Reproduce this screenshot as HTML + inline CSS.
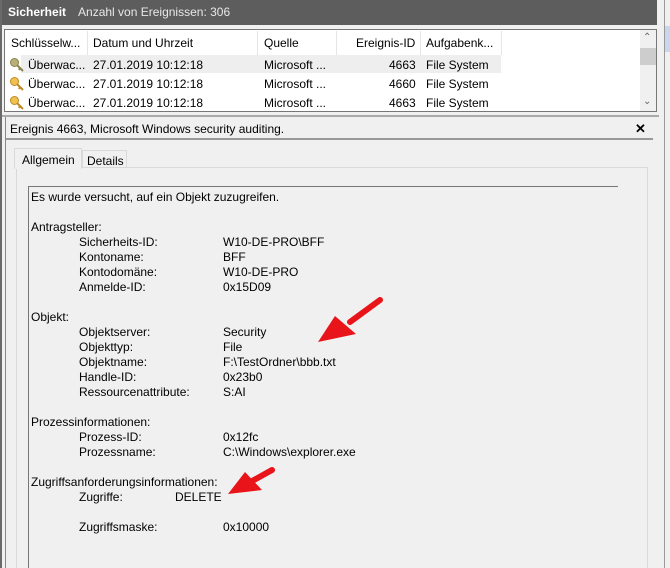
<!DOCTYPE html><html><head><style>
*{margin:0;padding:0;box-sizing:border-box}
html{overflow:hidden}
body{width:670px;height:568px;background:#f0f0f0;font-family:"Liberation Sans",sans-serif;font-size:12px;color:#000;position:relative;overflow:hidden}
.a{position:absolute;white-space:nowrap}
</style></head><body>
<div class="a" style="left:0;top:0;width:657px;height:25px;background:#5d5d5d;color:#fff;font-size:12px;line-height:24px;padding-left:8px"><b>Sicherheit</b><span style="margin-left:12px;color:#e8e8e8">Anzahl von Ereignissen: 306</span></div>
<div class="a" style="left:0;top:0;width:2px;height:568px;background:#6a6a6a"></div>
<div class="a" style="left:664px;top:0;width:1px;height:568px;background:#999"></div>
<div class="a" style="left:665px;top:26px;width:5px;height:26px;background:#c8d8ec"></div>
<div class="a" style="left:4px;top:29px;width:653px;height:83px;background:#fff;border:1px solid #777"></div>
<div class="a" style="left:640px;top:30px;width:16px;height:81px;background:#f0f0f0"></div>
<div class="a" style="left:640px;top:48px;width:16px;height:17px;background:#cdcdcd"></div>
<div class="a" style="left:643px;top:32px;font-size:10px;color:#666">&#8963;</div>
<div class="a" style="left:643px;top:96px;font-size:10px;color:#666">&#8964;</div>
<div class="a" style="left:21px;top:55px;width:480px;height:18px;background:#eeeeee"></div>
<div class="a" style="left:87px;top:31px;width:1px;height:24px;background:#e5e5e5"></div>
<div class="a" style="left:257px;top:31px;width:1px;height:24px;background:#e5e5e5"></div>
<div class="a" style="left:336px;top:31px;width:1px;height:24px;background:#e5e5e5"></div>
<div class="a" style="left:420px;top:31px;width:1px;height:24px;background:#e5e5e5"></div>
<div class="a" style="left:501px;top:31px;width:1px;height:24px;background:#e5e5e5"></div>
<div class="a" style="left:11px;top:36px">Schlüsselw...</div>
<div class="a" style="left:93px;top:36px">Datum und Uhrzeit</div>
<div class="a" style="left:264px;top:36px">Quelle</div>
<div class="a" style="left:356px;top:36px">Ereignis-ID</div>
<div class="a" style="left:426px;top:36px">Aufgabenk...</div>
<div class="a" style="top:57px;left:0;width:500px">
<svg class="a" style="left:9px;top:0" width="16" height="16"><circle cx="5.5" cy="5.5" r="4" fill="#b8b078" stroke="#8a8450"/><path d="M8 8 L14 14 M11 11 L10 13" stroke="#8a8450" stroke-width="2"/></svg>
<div class="a" style="left:28px;top:1px">Überwac...</div><div class="a" style="left:93px;top:1px">27.01.2019 10:12:18</div><div class="a" style="left:264px;top:1px">Microsoft ...</div><div class="a" style="left:389px;top:1px">4663</div><div class="a" style="left:426px;top:1px">File System</div></div>
<div class="a" style="top:76px;left:0;width:500px">
<svg class="a" style="left:9px;top:0" width="16" height="16"><circle cx="5.5" cy="5.5" r="4" fill="#f0c050" stroke="#c08a20"/><path d="M8 8 L14 14 M11 11 L10 13" stroke="#c08a20" stroke-width="2"/></svg>
<div class="a" style="left:28px;top:1px">Überwac...</div><div class="a" style="left:93px;top:1px">27.01.2019 10:12:18</div><div class="a" style="left:264px;top:1px">Microsoft ...</div><div class="a" style="left:389px;top:1px">4660</div><div class="a" style="left:426px;top:1px">File System</div></div>
<div class="a" style="top:95px;left:0;width:500px">
<svg class="a" style="left:9px;top:0" width="16" height="16"><circle cx="5.5" cy="5.5" r="4" fill="#f0c050" stroke="#c08a20"/><path d="M8 8 L14 14 M11 11 L10 13" stroke="#c08a20" stroke-width="2"/></svg>
<div class="a" style="left:28px;top:1px">Überwac...</div><div class="a" style="left:93px;top:1px">27.01.2019 10:12:18</div><div class="a" style="left:264px;top:1px">Microsoft ...</div><div class="a" style="left:389px;top:1px">4663</div><div class="a" style="left:426px;top:1px">File System</div></div>
<div class="a" style="left:2px;top:115px;width:657px;height:2px;background:#aaa"></div>
<div class="a" style="left:5px;top:117px;width:1px;height:451px;background:#888"></div>
<div class="a" style="left:10px;top:122px">Ereignis 4663, Microsoft Windows security auditing.</div>
<div class="a" style="left:635px;top:121px;font-weight:bold;font-size:13px">✕</div>
<div class="a" style="left:6px;top:138px;width:647px;height:2px;background:#999"></div>
<div class="a" style="left:16px;top:167px;width:632px;height:401px;background:#f0f0f0;border:1px solid #d9d9d9;border-bottom:none"></div>
<div class="a" style="left:14px;top:148px;width:68px;height:21px;background:#f0f0f0;border:1px solid #d9d9d9;border-bottom:none;padding:4px 0 0 7px">Allgemein</div>
<div class="a" style="left:82px;top:150px;width:45px;height:17px;border:1px solid #d9d9d9;border-bottom:none;padding:3px 0 0 4px">Details</div>
<div class="a" style="left:28px;top:186px;width:590px;height:382px;border-top:1px solid #777;border-left:1px solid #777"></div>
<div class="a" style="left:31px;top:190px;line-height:15px">Es wurde versucht, auf ein Objekt zuzugreifen.<br><br>Antragsteller:<br><br><br><br><br><br>Objekt:<br><br><br><br><br><br><br>Prozessinformationen:<br><br><br><br>Zugriffsanforderungsinformationen:</div>
<div class="a" style="left:79px;top:235px;line-height:15px">Sicherheits-ID:<br>Kontoname:<br>Kontodomäne:<br>Anmelde-ID:<br><br><br>Objektserver:<br>Objekttyp:<br>Objektname:<br>Handle-ID:<br>Ressourcenattribute:<br><br><br>Prozess-ID:<br>Prozessname:<br><br><br>Zugriffe:<br><br>Zugriffsmaske:</div>
<div class="a" style="left:223px;top:235px;line-height:15px">W10-DE-PRO\BFF<br>BFF<br>W10-DE-PRO<br>0x15D09<br><br><br>Security<br>File<br>F:\TestOrdner\bbb.txt<br>0x23b0<br>S:AI<br><br><br>0x12fc<br>C:\Windows\explorer.exe<br><br><br><br><br>0x10000</div>
<div class="a" style="left:175px;top:490px">DELETE</div>
<svg class="a" style="left:0;top:0" width="670" height="568"><path d="M380 300 L350 322" stroke="#e8141a" stroke-width="6" stroke-linecap="round"/><path d="M318 342 L335 316 L356 334 Z" fill="#e8141a"/><path d="M272 470 L245 485" stroke="#e8141a" stroke-width="6" stroke-linecap="round"/><path d="M228 494 L245 472 L262 490 Z" fill="#e8141a"/></svg>
</body></html>
